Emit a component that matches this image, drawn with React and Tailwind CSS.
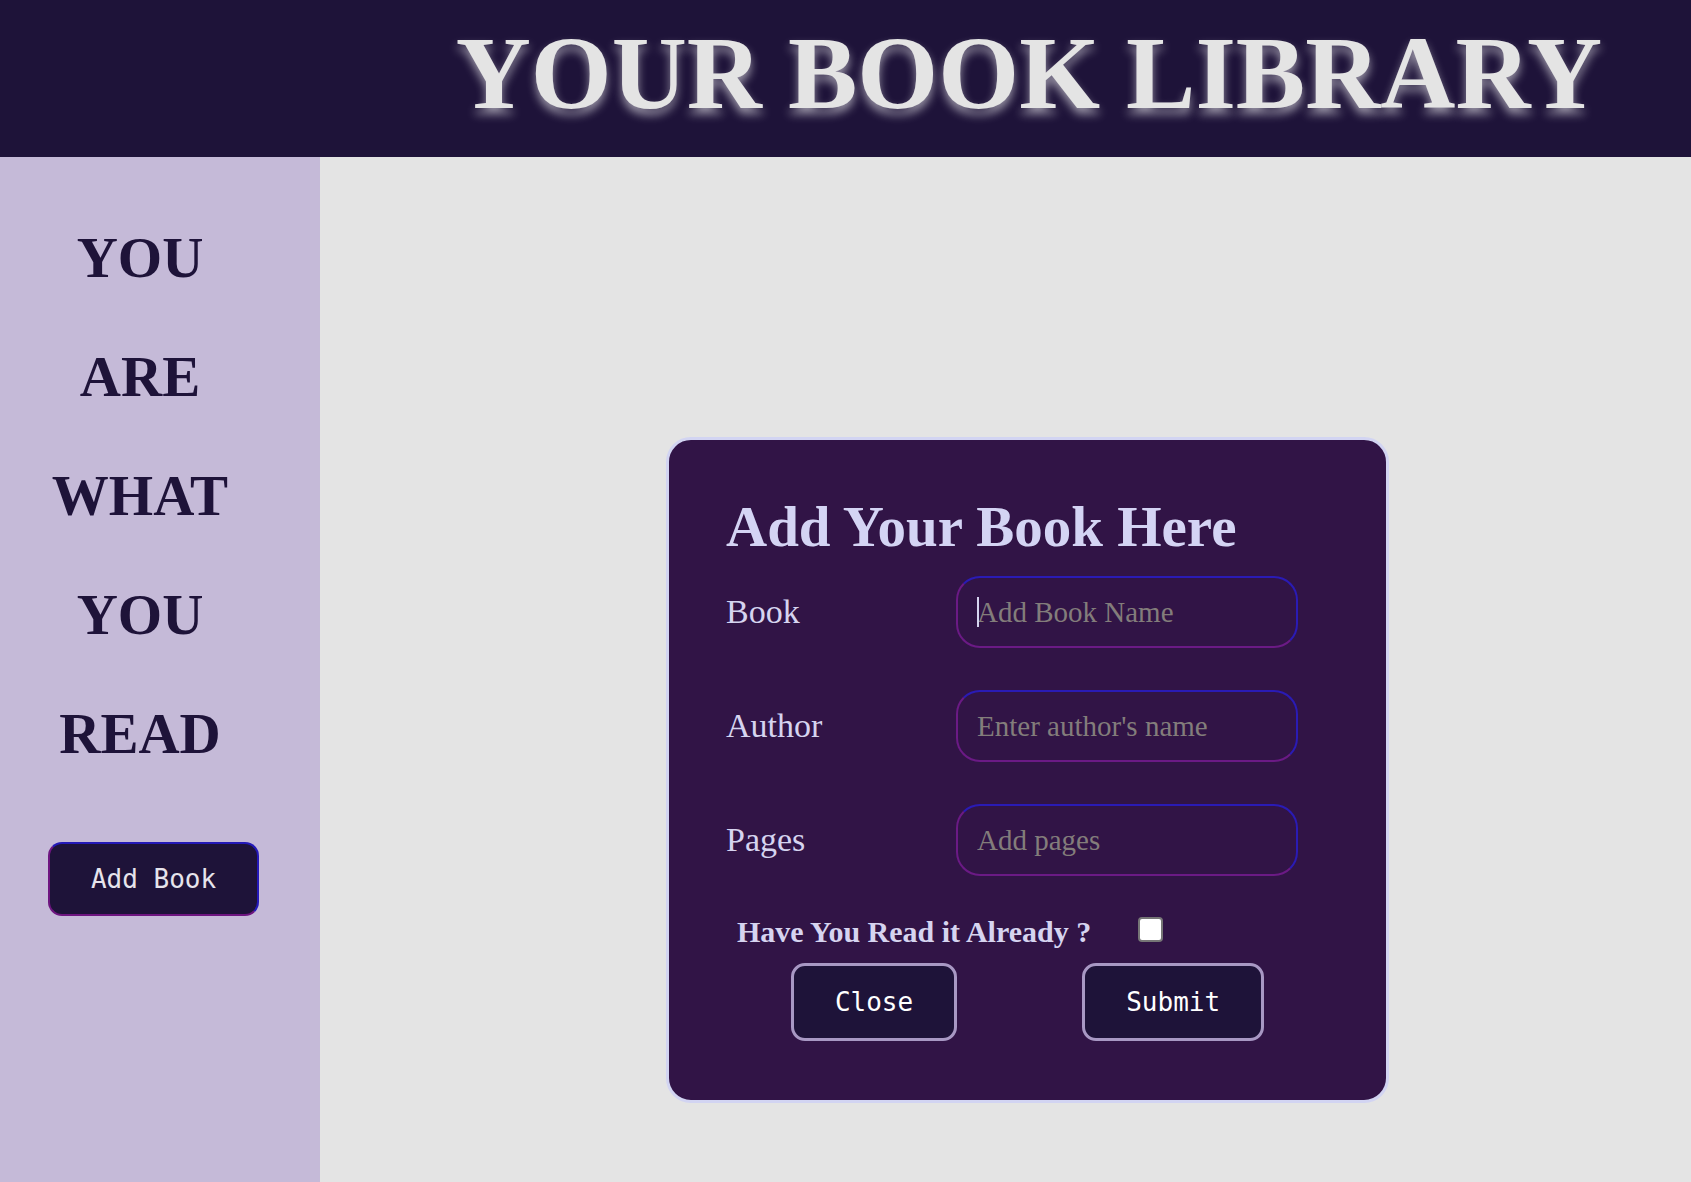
import React from "react";

const serif = "font-['Liberation_Serif','Times_New_Roman',serif]";
const mono = "font-['DejaVu_Sans_Mono','Liberation_Mono',monospace]";

function Field({ label, placeholder, caret }) {
  return (
    <div className="flex items-center">
      <label className={`w-[230px] text-[34px] leading-none text-[#d6d4f0] ${serif}`}>{label}</label>
      <div className="relative">
        <input
          placeholder={placeholder}
          className={`w-[342px] h-[72px] rounded-[24px] border-2 border-t-[#2a1bb5] border-r-[#2a1bb5] border-b-[#6b1a85] border-l-[#6b1a85] bg-transparent pl-[19px] text-[29px] text-[#d6d4f0] placeholder:text-[#837d7b] caret-[#d6d4f0] outline-none ${serif}`}
        />
        {caret && <span className="absolute left-[21px] top-[21px] w-[2px] h-[30px] bg-[#d6d4f0]" />}
      </div>
    </div>
  );
}

export default function App() {
  const words = ["YOU", "ARE", "WHAT", "YOU", "READ"];
  return (
    <div className="w-full h-[1182px] flex flex-col overflow-hidden bg-[#e4e4e4]">
      <header className="h-[157px] shrink-0 bg-[#1e1339] flex justify-end items-start pt-[21px] pr-[89px]">
        <h1
          className={`text-[104px] leading-none font-bold text-[#e4e4e4] whitespace-nowrap [text-shadow:0_6px_10px_rgba(255,255,255,0.55)] ${serif}`}
        >
          YOUR BOOK LIBRARY
        </h1>
      </header>
      <div className="flex flex-1">
        <aside className="w-[320px] shrink-0 bg-[#c5bad8] pt-[41px]">
          <div className="w-[280px] flex flex-col items-center">
            {words.map((w, i) => (
              <div key={i} className={`text-[57px] leading-[119px] font-bold text-[#1e1339] ${serif}`}>
                {w}
              </div>
            ))}
          </div>
          <button
            className={`ml-[48px] mt-[49px] w-[211px] h-[74px] rounded-[14px] border-2 border-t-[#2419b8] border-r-[#2419b8] border-b-[#6e1580] border-l-[#6e1580] bg-[#1e1339] text-[26px] text-[#e6e4ec] ${mono}`}
          >
            Add Book
          </button>
        </aside>
        <main className="flex-1 pl-[346px] pt-[280px]">
          <div className="w-[723px] h-[666px] rounded-[25px] border-[3px] border-[#d2d4f2] bg-[#311446] pt-[58px] pl-[57px]">
            <h2 className={`text-[57px] leading-none font-bold text-[#d4d4f4] ${serif}`}>Add Your Book Here</h2>
            <div className="mt-[21px] flex flex-col gap-[42px]">
              <Field label="Book" placeholder="Add Book Name" caret />
              <Field label="Author" placeholder="Enter author's name" />
              <Field label="Pages" placeholder="Add pages" />
            </div>
            <div className="mt-[41px] ml-[11px] flex items-start gap-[47px]">
              <span className={`text-[30px] leading-none font-bold text-[#d6d4f0] ${serif}`}>Have You Read it Already ?</span>
              <input
                type="checkbox"
                className="appearance-none w-[25px] h-[25px] rounded-[4px] border-2 border-[#767676] bg-white"
              />
            </div>
            <div className="mt-[16px] -ml-[57px] flex justify-center gap-[125px]">
              <button
                className={`h-[78px] px-[41px] rounded-[14px] border-[3px] border-[#a898c4] bg-[#1e1339] text-[26px] text-white ${mono}`}
              >
                Close
              </button>
              <button
                className={`h-[78px] px-[41px] rounded-[14px] border-[3px] border-[#a898c4] bg-[#1e1339] text-[26px] text-white ${mono}`}
              >
                Submit
              </button>
            </div>
          </div>
        </main>
      </div>
    </div>
  );
}
